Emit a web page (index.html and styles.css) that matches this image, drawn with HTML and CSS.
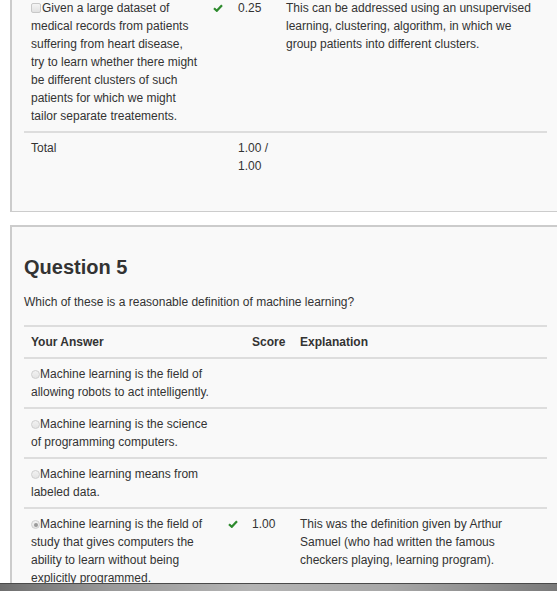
FILE: index.html
```html
<!DOCTYPE html>
<html>
<head>
<meta charset="utf-8">
<link rel="stylesheet" href="styles.css">
</head>
<body>
<section class="card card-first">
  <div class="qtable qtable-a">
    <div class="row">
      <div class="c-ans"><span class="box"></span>Given a large dataset of medical records from patients suffering from heart disease, try to learn whether there might be different clusters of such patients for which we might tailor separate treatements.</div>
      <div class="c-chk"><svg class="tick" viewBox="0 0 10 8" width="10" height="8"><path d="M1 4.2 L3.8 6.8 L9 1.2" fill="none" stroke="#2d8a2d" stroke-width="2.2"/></svg></div>
      <div class="c-score">0.25</div>
      <div class="c-exp">This can be addressed using an unsupervised learning, clustering, algorithm, in which we group patients into different clusters.</div>
    </div>
    <div class="row">
      <div class="c-ans">Total</div>
      <div class="c-chk"></div>
      <div class="c-score">1.00 / 1.00</div>
      <div class="c-exp"></div>
    </div>
  </div>
</section>

<section class="card card-second">
  <h3 class="qtitle">Question 5</h3>
  <p class="qtext">Which of these is a reasonable definition of machine learning?</p>
  <div class="qtable qtable-b">
    <div class="row head">
      <div class="c-ans">Your Answer</div>
      <div class="c-chk"></div>
      <div class="c-score">Score</div>
      <div class="c-exp">Explanation</div>
    </div>
    <div class="row">
      <div class="c-ans"><span class="radio"></span>Machine learning is the field of allowing robots to act intelligently.</div>
      <div class="c-chk"></div>
      <div class="c-score"></div>
      <div class="c-exp"></div>
    </div>
    <div class="row">
      <div class="c-ans"><span class="radio"></span>Machine learning is the science of programming computers.</div>
      <div class="c-chk"></div>
      <div class="c-score"></div>
      <div class="c-exp"></div>
    </div>
    <div class="row">
      <div class="c-ans"><span class="radio"></span>Machine learning means from labeled data.</div>
      <div class="c-chk"></div>
      <div class="c-score"></div>
      <div class="c-exp"></div>
    </div>
    <div class="row">
      <div class="c-ans"><span class="radio on"></span>Machine learning is the field of study that gives computers the ability to learn without being explicitly programmed.</div>
      <div class="c-chk"><svg class="tick" viewBox="0 0 10 8" width="10" height="8"><path d="M1 4.2 L3.8 6.8 L9 1.2" fill="none" stroke="#2d8a2d" stroke-width="2.2"/></svg></div>
      <div class="c-score">1.00</div>
      <div class="c-exp">This was the definition given by Arthur Samuel (who had written the famous checkers playing, learning program).</div>
    </div>
  </div>
</section>

<div class="bottombar"></div>
</body>
</html>
```

FILE: styles.css
```css
html, body {
  margin: 0;
  padding: 0;
  background: #ffffff;
  overflow: hidden;
}

body {
  font-family: "Liberation Sans", Arial, sans-serif;
  font-size: 12px;
  line-height: 18px;
  color: #333333;
}

.card {
  box-sizing: border-box;
  width: 551px;
  margin-left: 10px;
  background: #f9f9f9;
  border-left: 2px solid #cccccc;
  padding-left: 12px;
  padding-right: 12px;
}

.card-first {
  margin-top: -9px;
  padding-bottom: 30px;
  border-bottom: 1px solid #cccccc;
}

.card-second {
  margin-top: 13px;
  border-top: 2px solid #cccccc;
  padding-top: 29px;
  padding-bottom: 40px;
}

.qtitle {
  margin: 0;
  font-size: 20px;
  line-height: 22px;
  font-weight: bold;
  color: #333333;
}

.qtext {
  margin: 15px 0 14px 0;
}

.qtable {
  width: 523px;
}

.row {
  display: grid;
  border-top: 2px solid #dddddd;
  padding: 6px 0 6px 7px;
}

.qtable-a .row {
  grid-template-columns: 182px 25px 48px 261px;
}

.qtable-a .c-ans {
  padding-right: 15px;
}

.qtable-a .c-exp {
  padding-right: 9px;
}

.qtable-b .row {
  grid-template-columns: 197px 24px 48px 247px;
}

.qtable-b .c-ans {
  padding-right: 13px;
}

.qtable-b .c-exp {
  padding-right: 7px;
}

.row.head {
  font-weight: bold;
}

.tick {
  display: block;
  margin-top: 5px;
}

.box {
  display: inline-block;
  box-sizing: border-box;
  width: 10px;
  height: 10px;
  margin-right: 1px;
  vertical-align: -1px;
  border: 1px solid #c8c8c8;
  border-radius: 2px;
  background: linear-gradient(#f4f4f4, #e2e2e2);
}

.radio {
  display: inline-block;
  box-sizing: border-box;
  width: 9px;
  height: 9px;
  margin-right: 0;
  vertical-align: -1px;
  border: 1px solid #cfcfcf;
  border-radius: 50%;
  background: linear-gradient(#f2f2f2, #e4e4e4);
  position: relative;
}

.radio.on::after {
  content: "";
  position: absolute;
  left: 1.5px;
  top: 1.5px;
  width: 4px;
  height: 4px;
  border-radius: 50%;
  background: #9a9a9a;
}

.bottombar {
  position: fixed;
  left: 0;
  right: 0;
  bottom: 0;
  height: 7px;
  border-top: 1px solid #4a4a4a;
  background: linear-gradient(90deg, #6e6e6e 0%, #9a9a9a 20%, #b4b4b4 45%, #a8a8a8 70%, #7a7a7a 100%);
}
```
